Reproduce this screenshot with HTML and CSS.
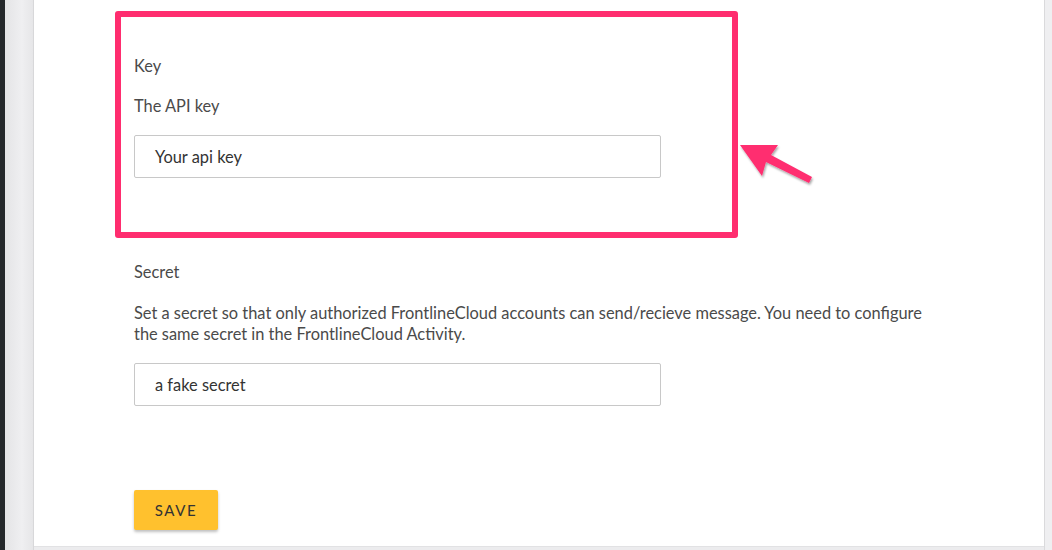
FILE: index.html
```html
<!DOCTYPE html>
<html>
<head>
<meta charset="utf-8">
<link rel="stylesheet" href="styles.css">
</head>
<body>
<div class="frame">
  <div class="edge-dark"></div>
  <div class="gutter-left"></div>
  <main class="card">
    <div class="highlight">
      <div class="field">
        <div class="label">Key</div>
        <div class="help">The API key</div>
        <div class="input">Your api key</div>
      </div>
      <svg class="arrow" width="90" height="60" viewBox="0 0 90 60">
        <defs>
          <filter id="sh" x="-20%" y="-20%" width="150%" height="150%">
            <feDropShadow dx="1" dy="2" stdDeviation="1.2" flood-color="#000" flood-opacity="0.35"/>
          </filter>
        </defs>
        <polygon filter="url(#sh)" fill="#ff2d6f" points="2,4 40,4 33,14 74,36 71,42 28,21 24,35"/>
      </svg>
    </div>
    <div class="field secret">
      <div class="label">Secret</div>
      <div class="help">Set a secret so that only authorized FrontlineCloud accounts can send/recieve message. You need to configure the same secret in the FrontlineCloud Activity.</div>
      <div class="input">a fake secret</div>
    </div>
    <button class="save">SAVE</button>
  </main>
  <div class="gutter-right"></div>
</div>
</body>
</html>
```
FILE: styles.css
```css
html, body {
  margin: 0;
  padding: 0;
  height: 100%;
}
body {
  font-family: Lato, "Liberation Sans", sans-serif;
  font-size: 16.4px;
  color: #4a4a4a;
  background: #ececee;
  overflow: hidden;
}
.frame {
  display: flex;
  height: 550px;
}
.edge-dark {
  width: 5px;
  background: #25282b;
}
.gutter-left {
  width: 28px;
  background: linear-gradient(to right, #e4e4e6, #efeff1 60%, #e6e6e8);
  border-right: 1px solid #d8d8da;
}
.gutter-right {
  width: 7px;
  background: #efeff1;
  border-left: 1px solid #dadadc;
}
.card {
  flex: 1;
  background: #fff;
  height: 547px;
  border-bottom: 1px solid #e2e2e4;
  padding: 11px 0 0 81px;
  box-sizing: border-box;
}
.highlight {
  position: relative;
  width: 623px;
  height: 227px;
  box-sizing: border-box;
  border: 6px solid #ff2d6f;
  border-radius: 3px;
  padding: 38px 0 0 13px;
}
.arrow {
  position: absolute;
  left: 617px;
  top: 124px;
  overflow: visible;
}
.field {
  display: flex;
  flex-direction: column;
  line-height: 21px;
}
.label {
  margin-bottom: 19px;
}
.help {
  margin-bottom: 19px;
  width: 795px;
}
.input {
  width: 527px;
  height: 43px;
  box-sizing: border-box;
  border: 1px solid #c8c8c8;
  border-radius: 2px;
  padding-left: 20px;
  display: flex;
  align-items: center;
  color: #333;
  font-size: 16.4px;
}
.secret {
  margin: 23px 0 0 19px;
}
.secret .label {
  margin-bottom: 20px;
}
.secret .help {
  margin-bottom: 19px;
}
.save {
  display: block;
  margin: 84px 0 0 19px;
  width: 84px;
  height: 40px;
  background: #ffc12e;
  border: none;
  border-radius: 2px;
  box-shadow: 0 2px 3px rgba(0,0,0,0.25);
  font-family: Lato, "Liberation Sans", sans-serif;
  font-size: 15px;
  letter-spacing: 1.6px;
  color: #333;
  padding: 0;
}
```
